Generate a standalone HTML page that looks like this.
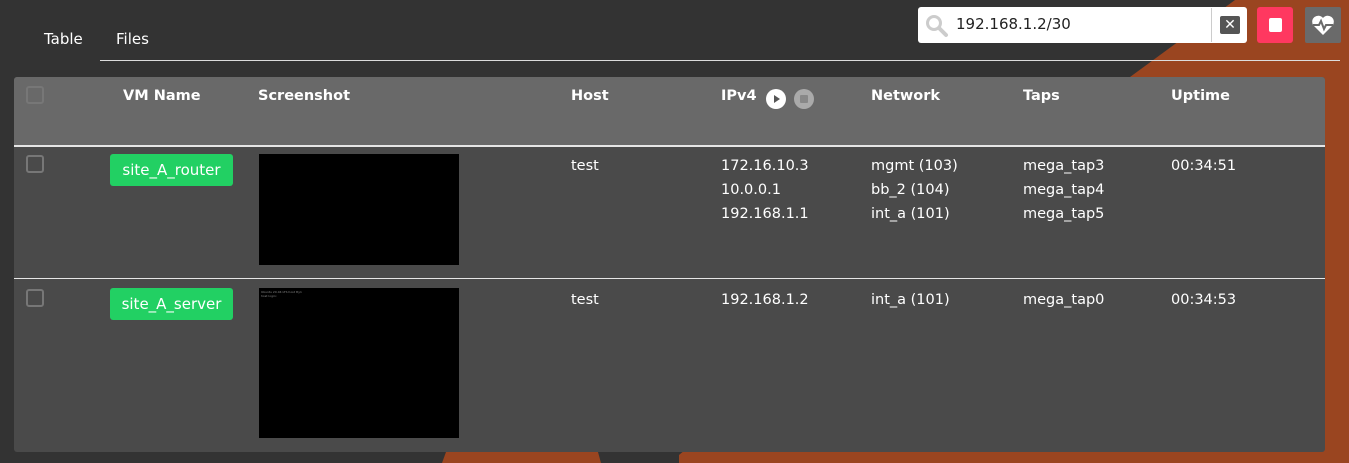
<!DOCTYPE html>
<html><head><style>
body{margin:0;width:1349px;height:463px;background:#333;font-family:"DejaVu Sans","Liberation Sans",sans-serif;color:#fff;position:relative;overflow:hidden;font-size:14px}
.abs{position:absolute}
.panel{left:14px;top:77px;width:1311px;height:375px;background:#4a4a4a;border-radius:3px;overflow:hidden}
.hdr{left:0;top:0;width:1311px;height:68px;background:#696969;border-bottom:2px solid #e6e6e6}
.th{font-weight:bold;font-size:14.5px;top:11px}
.cb{width:18px;height:18px;border:2px solid #777;border-radius:3px;box-sizing:border-box}
.tag{background:#22d063;border-radius:3px;height:32px;line-height:32px;font-size:15px;padding:0 6px;box-sizing:border-box;width:123px;text-align:center;white-space:nowrap}
.shot{background:#000;width:200px}
.td{font-size:14.5px;line-height:24px}
</style></head><body>
<svg class="abs" style="left:0;top:0" width="1349" height="463"><polygon points="1235,0 1349,0 1349,463 679,463 679,455 1130,77" fill="#9a4520"/><polygon points="446,452 598,452 601,463 442,463" fill="#9a4520"/></svg>
<div class="abs" style="left:30px;width:1310px;height:1px;background:#ddd;top:60px"></div>
<div class="abs" style="left:28px;top:58px;width:72px;height:3px;background:#333"></div>
<div class="abs" style="left:44px;top:30px;font-size:15px">Table</div>
<div class="abs" style="left:116px;top:30px;font-size:15px">Files</div>
<div class="abs" style="left:918px;top:7px;width:329px;height:36px;background:#fff;border-radius:3px"></div>
<svg class="abs" style="left:925px;top:14px" width="24" height="24"><circle cx="9" cy="9" r="6.5" fill="none" stroke="#ccc" stroke-width="3"/><line x1="14" y1="14" x2="21" y2="21" stroke="#ccc" stroke-width="4" stroke-linecap="round"/></svg>
<div class="abs" style="left:956px;top:15px;font-size:15px;color:#222">192.168.1.2/30</div>
<div class="abs" style="left:1211px;top:8px;width:1px;height:34px;background:#ccc"></div>
<div class="abs" style="left:1220px;top:16px;width:20px;height:18px;background:#555;border-radius:2px;color:#fff;font-weight:bold;font-size:14px;text-align:center;line-height:18px">✕</div>
<div class="abs" style="left:1257px;top:7px;width:36px;height:36px;background:#ff3860;border-radius:3px"><div class="abs" style="left:12px;top:11px;width:13px;height:14px;background:#fff;border-radius:2px"></div></div>
<div class="abs" style="left:1305px;top:7px;width:36px;height:36px;background:#6a6a6a;border-radius:2px"><svg class="abs" style="left:6px;top:7px" width="24" height="22"><path d="M12 21 L2.5 11.5 A5.5 5.5 0 0 1 12 4 A5.5 5.5 0 0 1 21.5 11.5Z" fill="#fff"/><polyline points="2,11 8,11 10,7 13,15 15,11 22,11" fill="none" stroke="#6a6a6a" stroke-width="2"/></svg></div>
<div class="abs panel">
<div class="abs hdr"></div>
<div class="abs cb" style="left:12px;top:9px"></div>
<div class="abs th" style="left:109px">VM Name</div>
<div class="abs th" style="left:244px">Screenshot</div>
<div class="abs th" style="left:557px">Host</div>
<div class="abs th" style="left:707px">IPv4</div>
<div class="abs" style="left:752px;top:12px;width:20px;height:20px;border-radius:50%;background:#fff"><svg width="20" height="20"><polygon points="8,6 8,14 14,10" fill="#555"/></svg></div>
<div class="abs" style="left:780px;top:12px;width:20px;height:20px;border-radius:50%;background:#aaa"><div class="abs" style="left:6px;top:6px;width:8px;height:8px;background:#888;border-radius:1px"></div></div>
<div class="abs th" style="left:857px">Network</div>
<div class="abs th" style="left:1009px">Taps</div>
<div class="abs th" style="left:1157px">Uptime</div>

<div class="abs cb" style="left:12px;top:78px"></div>
<div class="abs tag" style="left:96px;top:77px">site_A_router</div>
<div class="abs shot" style="left:245px;top:77px;height:111px"></div>
<div class="abs td" style="left:557px;top:77px">test</div>
<div class="abs td" style="left:707px;top:77px">172.16.10.3<br>10.0.0.1<br>192.168.1.1</div>
<div class="abs td" style="left:857px;top:77px">mgmt (103)<br>bb_2 (104)<br>int_a (101)</div>
<div class="abs td" style="left:1009px;top:77px">mega_tap3<br>mega_tap4<br>mega_tap5</div>
<div class="abs td" style="left:1157px;top:77px">00:34:51</div>

<div class="abs" style="left:0;top:201px;width:1311px;height:1px;background:#e6e6e6"></div>
<div class="abs cb" style="left:12px;top:212px"></div>
<div class="abs tag" style="left:96px;top:211px">site_A_server</div>
<div class="abs shot" style="left:245px;top:211px;height:150px"><div style="font-size:3px;color:#888;padding:2px">Ubuntu 20.04 LTS host tty1<br>host login:</div></div>
<div class="abs td" style="left:557px;top:211px">test</div>
<div class="abs td" style="left:707px;top:211px">192.168.1.2</div>
<div class="abs td" style="left:857px;top:211px">int_a (101)</div>
<div class="abs td" style="left:1009px;top:211px">mega_tap0</div>
<div class="abs td" style="left:1157px;top:211px">00:34:53</div>
</div>
</body></html>
